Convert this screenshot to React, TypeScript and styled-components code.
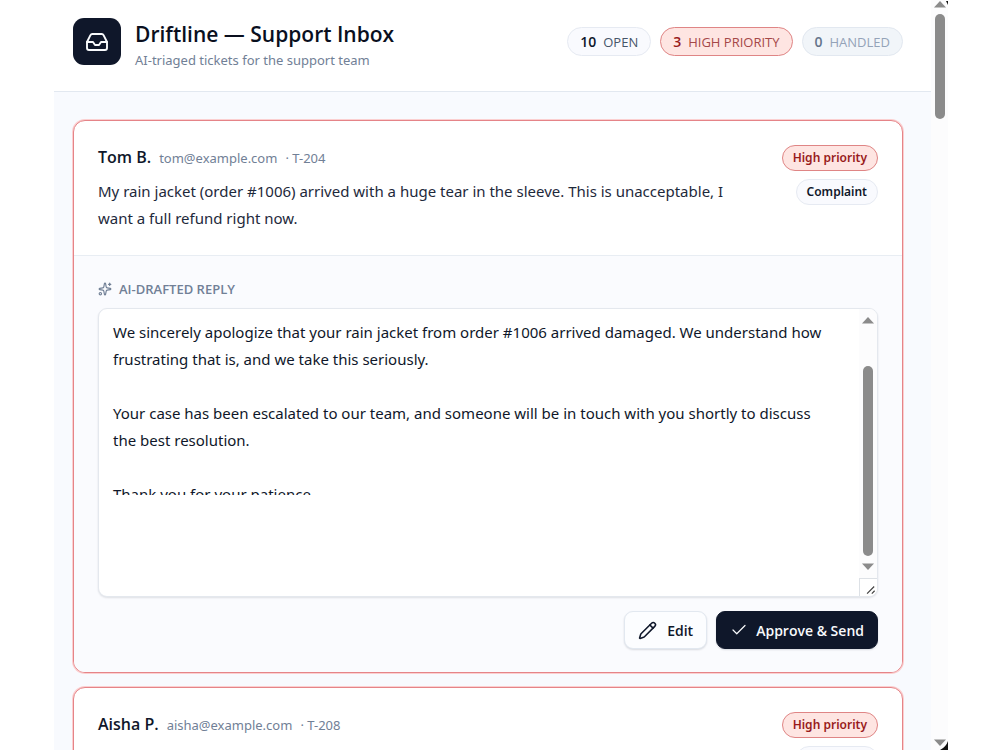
import React from "react";
import styled, { createGlobalStyle, css } from "styled-components";
import { Check, Inbox, Pencil, Sparkles } from "lucide-react";

const bodyFont = `"Noto Sans", sans-serif`;
const strongFont = `"Open Sans", "Noto Sans", sans-serif`;

const GlobalStyle = createGlobalStyle`
  *, *::before, *::after { box-sizing: border-box; }
  body {
    margin: 0;
    background: #ffffff;
    color: #0f172a;
    font-family: ${bodyFont};
  }
  h1, h2, p { margin: 0; }
  button, textarea { font: inherit; color: inherit; }
`;

type Tone = "plain" | "danger" | "muted";

const Viewport = styled.div`
  position: relative;
  display: flex;
  height: 100vh;
  margin: 0 52px 0 54px;
  overflow: hidden;
  background: #f8fafe;
`;

const Page = styled.div`
  flex: 1;
  min-width: 0;
`;

const Header = styled.header`
  display: flex;
  align-items: flex-start;
  justify-content: space-between;
  padding: 18px 28px 21px 19px;
  background: #ffffff;
  border-bottom: 1px solid #e2e8f0;
`;

const Brand = styled.div`
  display: flex;
  gap: 14px;
`;

const Logo = styled.div`
  display: grid;
  place-items: center;
  width: 48px;
  height: 47px;
  border-radius: 11px;
  background: #0f172a;
  color: #f8fafc;
`;

const Title = styled.h1`
  font-family: ${strongFont};
  font-size: 21px;
  font-weight: 600;
  line-height: 32px;
  color: #0a0f1e;
`;

const Subtitle = styled.p`
  font-size: 13px;
  line-height: 20px;
  color: #718096;
`;

const Stats = styled.div`
  display: flex;
  gap: 9px;
  padding-top: 9px;
`;

const tones = {
  plain: css`
    background: #f9fafe;
    border-color: #e6eaf2;
    color: #475569;
    strong { color: #0f172a; }
  `,
  danger: css`
    background: #fee5e2;
    border-color: #df8585;
    color: #a54848;
    strong { color: #991b1b; }
  `,
  muted: css`
    background: #f1f5f9;
    border-color: #e2e8f0;
    color: #94a3b8;
    strong { color: #64748b; }
  `,
};

const Stat = styled.div<{ $tone: Tone }>`
  display: flex;
  align-items: center;
  gap: 7px;
  height: 29px;
  padding: 0 12px;
  border: 1px solid;
  border-radius: 15px;
  font-family: ${strongFont};
  font-size: 13px;
  strong { font-size: 14px; font-weight: 600; }
  ${({ $tone }) => tones[$tone]}
`;

const List = styled.main`
  display: flex;
  flex-direction: column;
  gap: 14px;
  padding: 28px 28px 28px 19px;
`;

const Card = styled.article`
  overflow: hidden;
  border: 1px solid #e58488;
  border-radius: 12px;
  background: #ffffff;
  box-shadow: 0 0 0 1px #fbcfd0;
`;

const Ticket = styled.div`
  display: flex;
  justify-content: space-between;
  gap: 24px;
  padding: 24px 24px 23px;
`;

const TicketText = styled.div`
  flex: 1;
  min-width: 0;
`;

const Sender = styled.div`
  display: flex;
  align-items: baseline;
  gap: 8px;
  margin-bottom: 7px;
  font-size: 13px;
  line-height: 25px;
  color: #718096;
`;

const Name = styled.h2`
  font-family: ${strongFont};
  font-size: 16px;
  font-weight: 600;
  color: #0f172a;
`;

const Message = styled.p`
  font-size: 15px;
  line-height: 27px;
  color: #1e293b;
`;

const Badges = styled.div`
  display: flex;
  flex-direction: column;
  align-items: flex-end;
  gap: 8px;
`;

const Badge = styled.span<{ $tone: Tone }>`
  height: 26px;
  padding: 0 10px;
  border: 1px solid;
  border-radius: 13px;
  font-size: 12px;
  font-weight: 600;
  line-height: 24px;
  ${({ $tone }) => tones[$tone]}
  color: ${({ $tone }) => ($tone === "danger" ? "#991b1b" : "#0f172a")};
`;

const Draft = styled.section`
  padding: 24px 24px 23px;
  border-top: 1px solid #e8edf3;
  background: #fafbfe;
`;

const DraftLabel = styled.label`
  display: flex;
  align-items: center;
  gap: 7px;
  margin-bottom: 10px;
  font-family: ${strongFont};
  font-size: 13px;
  font-weight: 600;
  line-height: 18px;
  color: #718096;
`;

const Editor = styled.div`
  position: relative;
  display: flex;
  height: 289px;
  overflow: hidden;
  border: 1px solid #e4e8ee;
  border-radius: 9px;
  background: #ffffff;
  box-shadow: 0 1px 2px rgba(15, 23, 42, 0.12);
`;

const Reply = styled.textarea`
  flex: 1;
  min-width: 0;
  height: 186px;
  padding: 10px 28px 0 14px;
  border: 0;
  outline: 0;
  resize: none;
  overflow: hidden;
  background: transparent;
  font-size: 15px;
  line-height: 27px;
`;

const Track = styled.div<{ $wide?: boolean }>`
  display: flex;
  flex-direction: column;
  align-items: center;
  flex: none;
  width: ${({ $wide }) => ($wide ? 17 : 18)}px;
  padding: ${({ $wide }) => ($wide ? "0 0 3px" : "7px 0 25px")};
  background: #fcfcfd;
  svg { flex: none; display: block; }
`;

const Thumb = styled.div<{ $start: number; $length: number }>`
  flex: none;
  height: ${({ $length }) => $length}px;
  width: 10px;
  margin: ${({ $start }) => $start}px 0 auto;
  border-radius: 5px;
  background: #8b8b8b;
`;

const Grip = styled.svg`
  position: absolute;
  right: 0;
  bottom: 0;
  border: solid #dde1e6;
  border-width: 1px 0 0 1px;
  background: #ffffff;
`;

const Actions = styled.div`
  display: flex;
  justify-content: flex-end;
  gap: 9px;
  margin-top: 14px;
`;

const Button = styled.button<{ $primary?: boolean }>`
  display: flex;
  align-items: center;
  gap: ${({ $primary }) => ($primary ? 8 : 10)}px;
  height: 38px;
  padding: 0 13px;
  border: 1px solid ${({ $primary }) => ($primary ? "#0f172a" : "#e2e8f0")};
  border-radius: 9px;
  background: ${({ $primary }) => ($primary ? "#0f172a" : "#fcfdff")};
  color: ${({ $primary }) => ($primary ? "#f8fafc" : "#0f172a")};
  box-shadow: 0 1px 2px rgba(15, 23, 42, 0.14);
  font-family: ${strongFont};
  font-size: 14px;
  font-weight: 600;
`;

const Corner = styled.svg<{ $edge: "top" | "bottom" }>`
  position: absolute;
  right: 0;
  ${({ $edge }) => $edge}: 0;
`;

const Arrow = ({ up }: { up?: boolean }) => (
  <svg width="12" height="8" viewBox="0 0 12 8" aria-hidden="true">
    <path d={up ? "M0 7.5 6 1l6 6.5z" : "M0 .5 6 7l6-6.5z"} fill="#8b8b8b" />
  </svg>
);

const draft = `We sincerely apologize that your rain jacket from order #1006 arrived damaged. We understand how frustrating that is, and we take this seriously.

Your case has been escalated to our team, and someone will be in touch with you shortly to discuss the best resolution.

Thank you for your patience.`;

const stats: { count: number; label: string; tone: Tone }[] = [
  { count: 10, label: "OPEN", tone: "plain" },
  { count: 3, label: "HIGH PRIORITY", tone: "danger" },
  { count: 0, label: "HANDLED", tone: "muted" },
];

interface TicketProps {
  name: string;
  email: string;
  id: string;
  message?: string;
  reply?: string;
}

const TicketCard = ({ name, email, id, message, reply }: TicketProps) => (
  <Card>
    <Ticket>
      <TicketText>
        <Sender>
          <Name>{name}</Name>
          <span>{email}</span>
          <span>· {id}</span>
        </Sender>
        {message && <Message>{message}</Message>}
      </TicketText>
      <Badges>
        <Badge $tone="danger">High priority</Badge>
        <Badge $tone="plain">Complaint</Badge>
      </Badges>
    </Ticket>
    {reply && (
      <Draft>
        <DraftLabel htmlFor={id}>
          <Sparkles size={14} strokeWidth={2} />
          AI-DRAFTED REPLY
        </DraftLabel>
        <Editor>
          <Reply id={id} defaultValue={reply} spellCheck={false} />
          <Track>
            <Arrow up />
            <Thumb $start={42} $length={190} />
            <Arrow />
          </Track>
          <Grip width="18" height="18" viewBox="0 0 18 18" aria-hidden="true">
            <path d="M7.5 15.5 15 8M12.5 15.5l3-3" stroke="#444" strokeWidth="1.3" />
          </Grip>
        </Editor>
        <Actions>
          <Button type="button">
            <Pencil size={19} strokeWidth={2} />
            Edit
          </Button>
          <Button type="button" $primary>
            <Check size={18} strokeWidth={1.6} />
            Approve &amp; Send
          </Button>
        </Actions>
      </Draft>
    )}
  </Card>
);

export default function App() {
  return (
    <>
      <GlobalStyle />
      <Viewport>
        <Page>
          <Header>
            <Brand>
              <Logo>
                <Inbox size={24} strokeWidth={1.9} />
              </Logo>
              <div>
                <Title>Driftline — Support Inbox</Title>
                <Subtitle>AI-triaged tickets for the support team</Subtitle>
              </div>
            </Brand>
            <Stats>
              {stats.map((s) => (
                <Stat key={s.label} $tone={s.tone}>
                  <strong>{s.count}</strong>
                  {s.label}
                </Stat>
              ))}
            </Stats>
          </Header>
          <List>
            <TicketCard
              name="Tom B."
              email="tom@example.com"
              id="T-204"
              message="My rain jacket (order #1006) arrived with a huge tear in the sleeve. This is unacceptable, I want a full refund right now."
              reply={draft}
            />
            <TicketCard name="Aisha P." email="aisha@example.com" id="T-208" />
          </List>
        </Page>
        <Track $wide>
          <Arrow up />
          <Thumb $start={6} $length={105} />
          <Arrow />
        </Track>
        <Corner $edge="top" width="2" height="5" aria-hidden="true">
          <path d="M0 1h2v4z" fill="#111" />
        </Corner>
        <Corner $edge="bottom" width="8" height="9" aria-hidden="true">
          <path d="M8 0v9H0Q6 6 8 0z" fill="#111" />
        </Corner>
      </Viewport>
    </>
  );
}
